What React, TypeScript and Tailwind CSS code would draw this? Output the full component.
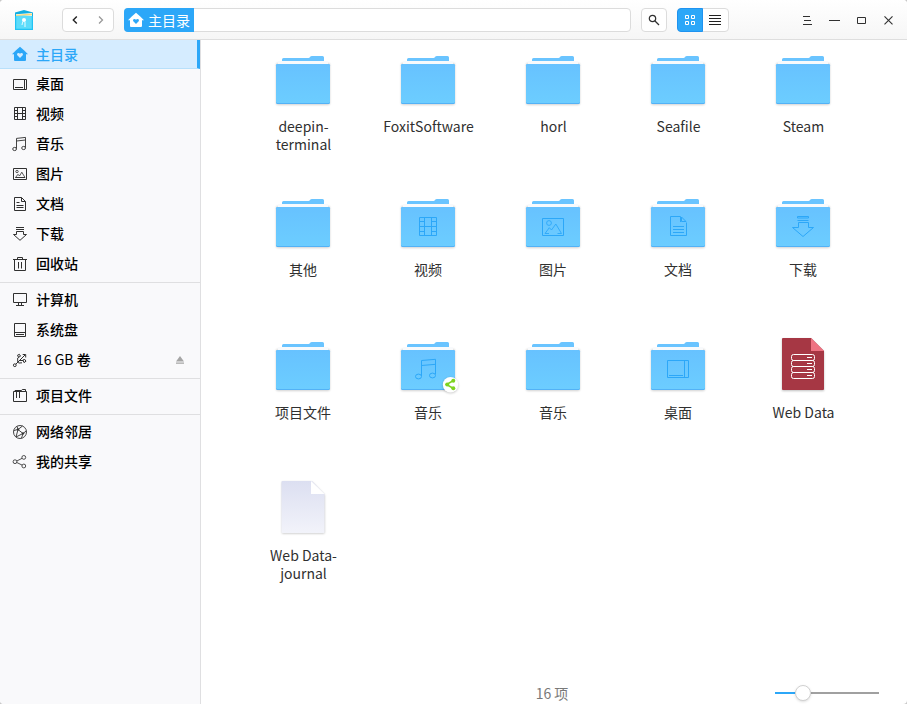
import React from "react";

type Kind =
  | "desktop" | "video" | "music" | "image" | "doc" | "download" | "trash"
  | "computer" | "disk" | "usb" | "project" | "network" | "share" | "home";

function House({ fill, heart }: { fill: string; heart: string }) {
  return (
    <svg width="16" height="16" viewBox="0 0 16 16" className="shrink-0">
      <path d="M8 .8 12 4.3 16 8.2H14V14Q14 15 13 15H3Q2 15 2 14V8.2H0L4 4.3Z" fill={fill} />
      <path d="M8 12 5.3 9.2Q4.6 8.1 5.5 7.3Q6.8 6.4 8 7.7Q9.2 6.4 10.5 7.3Q11.4 8.1 10.7 9.2Z" fill={heart} />
    </svg>
  );
}

function SideIcon({ kind }: { kind: Kind }) {
  if (kind === "home") return <House fill="#2ca7f8" heart="#d5ecff" />;
  return (
    <svg width="16" height="16" viewBox="0 0 16 16" fill="none" stroke="#303030" strokeWidth="1" className="shrink-0">
      {kind === "desktop" && <path d="M1.5 3.5h13v10h-13ZM12.5 3.5v10M3 11.5h8" />}
      {kind === "video" && <path d="M2.5 1.5h11v12h-11ZM5.5 1.5v12M10.5 1.5v12M5.5 7.5h5M2.5 4.5h3M2.5 7.5h3M2.5 10.5h3M10.5 4.5h3M10.5 7.5h3M10.5 10.5h3" />}
      {kind === "music" && (
        <g strokeWidth=".9">
          <path d="M4.5 12.5V2.4L13.5 1.4V11.5M4.5 5 13.5 4" />
          <ellipse cx="2.6" cy="13" rx="1.9" ry="1.6" />
          <ellipse cx="11.6" cy="12" rx="1.9" ry="1.6" />
        </g>
      )}
      {kind === "image" && (
        <g>
          <path d="M1.5 2.5h13v11h-13Z" />
          <path strokeWidth=".8" d="M3.5 11.5 6 8.3 7.5 10 9.8 6.2 13 11.5ZM3.5 11.5H13" />
          <circle strokeWidth=".8" cx="5" cy="5.5" r="1.2" />
        </g>
      )}
      {kind === "doc" && <path d="M9.5 1.5h-7v13h11V5.5ZM9.5 1.5v4h4M4.5 6.5h3M4.5 9.5h7M4.5 11.5h7" />}
      {kind === "download" && <path d="M4 1.5h8M4 3.5h8M4.5 5.5h7v3h3L8 14.3 1.5 8.5h3Z" />}
      {kind === "trash" && <path d="M1 3.5h14M5.5 3V1.5h5V3M2.5 3.5v11h11v-11M6.5 6v6.5M9.5 6v6.5" />}
      {kind === "computer" && <path d="M1.5 1.5h13v9h-13ZM6.5 10.5v2.5M9.5 10.5v2.5M4 13.5h8" />}
      {kind === "disk" && <path d="M2.5 1.5h11v13h-11ZM2.5 10.5h11M4 12.5h8" />}
      {kind === "usb" && (
        <g strokeWidth="1">
          <path d="M3.800 12.200 13 3M10.700 2.500h3v3M5.700 9.500V6L7 4.800M8 8.500h3.200" />
          <circle cx="2.800" cy="13.200" r="1.400" />
          <path d="M5.500 3.200 7.400 2.300 8.500 4.200 6.500 5.300ZM10.800 8l2-.6L14 9.200 12 10.600Z" />
          <path d="M5.200 9.500q1 2.400 4.800 1.300" />
        </g>
      )}
      {kind === "project" && <path d="M1.5 3.5h13v10h-13ZM4.5 4v6M7.500 4v6M3 3.500V2.500h6.500l.8-1h3.200v2" />}
      {kind === "network" && (
        <g strokeWidth=".9">
          <circle cx="8" cy="8" r="6.5" />
          <path d="M1.8 6.5 6 5.5 11 9.5 9.5 14.2M6 5.5 10.5 2M6 5.5 4 13M11 9.5 4 13M11 9.5 14.2 7M6 5.5 5 2.2" />
          <circle cx="6" cy="5.5" r=".8" fill="#303030" />
          <circle cx="11" cy="9.5" r=".8" fill="#303030" />
        </g>
      )}
      {kind === "share" && (
        <g strokeWidth=".85">
          <circle cx="3" cy="7.7" r="1.9" />
          <circle cx="11.8" cy="3.4" r="1.9" />
          <circle cx="11.8" cy="12" r="1.9" />
          <path d="M4.8 7 10.1 4.3M4.8 8.5l5.3 2.6" />
        </g>
      )}
    </svg>
  );
}

function SideItem({ kind, label, active = false, eject = false }: { kind: Kind; label: React.ReactNode; active?: boolean; eject?: boolean }) {
  if (active) {
    return (
      <div className="mb-px flex h-[29px] items-center border-b border-r-[3px] border-[#b8e0fb] border-r-[#2ca7f8] bg-[#d5ecff] pl-3 text-[#2ca7f8]">
        <SideIcon kind={kind} />
        <span className="ml-2 font-medium leading-5">{label}</span>
      </div>
    );
  }
  return (
    <div className="flex h-[30px] items-center pb-1 pl-3 pt-0.5 text-black">
      <SideIcon kind={kind} />
      <span className="mb-0.5 ml-2 font-medium leading-5">{label}</span>
      {eject && (
        <svg width="8" height="8" viewBox="0 0 8 8" className="ml-auto mr-4 shrink-0" fill="#a5a5a5">
          <path d="M4 0 8 5.500H0ZM0 6.500h8v1.200H0Z" />
        </svg>
      )}
    </div>
  );
}

function Separator() {
  return <div className="mb-[3px] mt-0.5 h-px bg-[#dfdfe1]" />;
}

function Emblem({ kind }: { kind: string }) {
  return (
    <g fill="none" stroke="#2ca7f8" strokeWidth="1">
      {kind === "video" && <path d="M23.5 24.5h17v18h-17ZM28.5 24.5v18M35.5 24.5v18M28.5 33.5h7M23.5 28.5h5M23.5 33.5h5M23.5 38.5h5M35.5 28.5h5M35.5 33.5h5M35.5 38.5h5" />}
      {kind === "image" && (
        <g>
          <path d="M21.5 25.500h21v17h-21Z" />
          <path strokeWidth=".9" d="M24 40.500 28.300 34.700 30.500 37 34.800 31 40.500 40.500H36.500M24 40.500H28" />
          <circle strokeWidth=".9" cx="28" cy="30" r="2.400" />
        </g>
      )}
      {kind === "doc" && <path d="M34.500 23.500h-10v19h16V29.500M34.500 23.500v5.500M35.500 24v4.500h4.500ZM27 33.500h11M27 36.500h11M27 39.500h11" />}
      {kind === "download" && <path d="M26.5 23.5h11v1.500h-11ZM26.5 27.500h11M27.500 29.500h10v5h5L32 43.500 21.500 34.500h6Z" />}
      {kind === "music" && (
        <g>
          <path d="M25.500 40V24.500l14-1.200v15M25.500 29.500l14-1.200" />
          <ellipse cx="22.500" cy="40.500" rx="3" ry="2.400" />
          <ellipse cx="36.500" cy="39.500" rx="3" ry="2.400" />
        </g>
      )}
      {kind === "desktop" && <path d="M21.5 24.5h21v17h-21ZM38.5 24.5v17M23 39.500h14" />}
    </g>
  );
}

function Folder({ emblem, shared }: { emblem?: string; shared?: boolean }) {
  return (
    <svg width="65" height="60" viewBox="0 0 65 60" className="block">
      <defs>
        <linearGradient id="body" x1="0" y1="0" x2="0" y2="1">
          <stop offset="0" stopColor="#67c2ff" />
          <stop offset="1" stopColor="#6ccdff" />
        </linearGradient>
        <filter id="soft" x="-20%" y="-20%" width="140%" height="150%">
          <feGaussianBlur stdDeviation="1.2" />
        </filter>
      </defs>
      <rect x="5" y="13" width="54" height="42" rx="2" fill="#000" opacity=".18" filter="url(#soft)" />
      <path d="M11 12V9.5Q11 8 12.500 8H37.500Q38.500 8 39 7Q39.500 6 41 6H51.500Q53 6 53 7.500V12Z" fill="#6ac4ff" />
      <rect x="7" y="11" width="50" height="5" rx="1" fill="#f8fafc" />
      <rect x="5" y="14" width="54" height="40" rx="1.500" fill="#53b2f6" />
      <path d="M5 15.500Q5 14 6.500 14H57.500Q59 14 59 15.500V51.500Q59 53 57.500 53H6.500Q5 53 5 51.500Z" fill="url(#body)" />
      {emblem && <Emblem kind={emblem} />}
      {shared && (
        <g>
          <circle cx="54.500" cy="49.500" r="8" fill="#000" opacity=".18" filter="url(#soft)" />
          <circle cx="54.500" cy="48.700" r="7.700" fill="#fff" />
          <path d="m57.500 44.500-7 4 7 4" fill="none" stroke="#7ed321" strokeWidth="1.500" />
          <g fill="#7ed321"><circle cx="57.300" cy="44.700" r="2" /><circle cx="51.200" cy="48.500" r="2" /><circle cx="57.300" cy="52.300" r="2" /></g>
        </g>
      )}
    </svg>
  );
}

function DatabaseFile() {
  return (
    <svg width="65" height="60" viewBox="0 0 65 60" className="block">
      <path d="M11 3H40L53 16V55H11Z" fill="#000" opacity=".25" filter="url(#soft)" />
      <path d="M12 2H40L53 15V53Q53 54 52 54H12Q11 54 11 53V3Q11 2 12 2Z" fill="#a63744" />
      <path d="M40 2 53 15H40Z" fill="#ee7282" />
      <g fill="none" stroke="#fff" strokeWidth="1">
        {[18.5, 24.5, 30.5, 36.5].map((y) => (
          <g key={y}>
            <rect x="20.500" y={y} width="23" height="6" rx="2" />
            <path d={"M36 " + (y + 3) + "h5"} />
          </g>
        ))}
      </g>
    </svg>
  );
}

function BlankFile() {
  return (
    <svg width="65" height="60" viewBox="0 0 65 60" className="block">
      <defs>
        <linearGradient id="sheet" x1="0" y1="0" x2="0" y2="1">
          <stop offset="0" stopColor="#dcdff1" />
          <stop offset="1" stopColor="#f2f3fa" />
        </linearGradient>
      </defs>
      <path d="M11 3H41L53.500 16V54.500H11Z" fill="#000" opacity=".25" filter="url(#soft)" />
      <path d="M11.500 2H41L53.500 15V53Q53.500 54 52.500 54H11.500Q10.500 54 10.500 53V3Q10.500 2 11.500 2Z" fill="url(#sheet)" />
      <path d="M40 2 53.500 15H40Z" fill="#fff" />
    </svg>
  );
}

interface Entry { name: string[]; emblem?: string; shared?: boolean; file?: "db" | "blank" }

const entries: Entry[] = [
  { name: ["deepin-", "terminal"] }, { name: ["FoxitSoftware"] }, { name: ["horl"] }, { name: ["Seafile"] }, { name: ["Steam"] },
  { name: ["其他"] }, { name: ["视频"], emblem: "video" }, { name: ["图片"], emblem: "image" }, { name: ["文档"], emblem: "doc" }, { name: ["下载"], emblem: "download" },
  { name: ["项目文件"] }, { name: ["音乐"], emblem: "music", shared: true }, { name: ["音乐"] }, { name: ["桌面"], emblem: "desktop" }, { name: ["Web Data"], file: "db" },
  { name: ["Web Data-", "journal"], file: "blank" },
];

function GridItem({ entry }: { entry: Entry }) {
  return (
    <div className="flex h-[143px] flex-col items-center">
      {entry.file === "db" ? <DatabaseFile /> : entry.file === "blank" ? <BlankFile /> : <Folder emblem={entry.emblem} shared={entry.shared} />}
      <div className="mt-[7px] text-center text-[14px] leading-[18px] text-[#303030]">
        {entry.name.map((line) => (
          <div key={line} className={/^[A-Za-z]/.test(line) ? "" : "mr-px"}>{line}</div>
        ))}
      </div>
    </div>
  );
}

function AppLogo() {
  return (
    <svg width="18" height="20" viewBox="0 0 18 20" className="shrink-0">
      <path d="M0 2.500 9 0l9 2.500V20H0Z" fill="#12aee2" />
      <path d="M1 4.200 17 3V7H1Z" fill="#fff" />
      <path d="M1 4.800 17 3.600V5.200L1 6.300Z" fill="#ffd978" />
      <path d="M0 6Q9 5 18 6V20H0Z" fill="#5ddcfa" />
      <path d="M.6 6V19.400H17.400V6" fill="none" stroke="#22c3f4" strokeWidth="1.200" />
      <circle cx="9" cy="10" r="2" fill="#fff" />
      <path d="M7.800 11.500 7 15M10 12v5" stroke="#d9f9ff" strokeWidth="1.100" />
    </svg>
  );
}

function Header() {
  return (
    <header className="flex h-10 items-center border-b border-[#dedede] bg-linear-to-b from-white to-[#f6f6f6] pl-[15px] pr-3.5 pt-px">
      <AppLogo />
      <div className="ml-[29px] flex h-6 w-[52px] items-center justify-between rounded border border-[#dcdcdc] bg-white px-2">
        <svg width="8" height="10" viewBox="0 0 8 10" fill="none" stroke="#222" strokeWidth="1.400"><path d="M5.800 1.500 2.300 5l3.500 3.500" /></svg>
        <svg width="8" height="10" viewBox="0 0 8 10" fill="none" stroke="#999" strokeWidth="1.300"><path d="M2 1.500 5.500 5 2 8.500" /></svg>
      </div>
      <div className="ml-2.5 flex h-6 w-[507px] rounded border border-[#dcdcdc] bg-white">
        <div className="-my-px -ml-px flex w-[70px] shrink-0 items-center rounded-l bg-[#2ca7f8] pl-1 text-[14px] text-white">
          <House fill="#fff" heart="#2ca7f8" />
          <span className="ml-1 leading-5">主目录</span>
        </div>
      </div>
      <div className="ml-2.5 flex h-6 w-[26px] items-center justify-center rounded border border-[#dcdcdc] bg-white">
        <svg width="12" height="12" viewBox="0 0 12 12" fill="none" stroke="#303030"><circle cx="4.500" cy="4.500" r="3.200" strokeWidth="1.200" /><path d="m7 7 4 4" strokeWidth="1.300" /></svg>
      </div>
      <div className="ml-2.5 flex h-6 w-[52px] rounded border border-[#dcdcdc] bg-white">
        <div className="-my-px -ml-px flex w-[26px] shrink-0 items-center justify-center rounded-l border border-[#1f93f0] bg-[#2ca7f8]">
          <svg width="10" height="10" viewBox="0 0 10 10" fill="none" stroke="#fff"><path d="M.5.5h3v3h-3ZM6.500.5h3v3h-3ZM.5 6.500h3v3h-3ZM6.500 6.500h3v3h-3Z" /></svg>
        </div>
        <div className="flex grow items-center pl-1.5">
          <svg width="12" height="10" viewBox="0 0 12 10" stroke="#222"><path d="M0 .5h12M0 3.500h12M0 6.500h12M0 9.500h12" /></svg>
        </div>
      </div>
      <svg width="92" height="10" viewBox="0 0 92 10" fill="none" stroke="#303030" className="ml-auto">
        <path d="M2 1.500h7M3 5.500h7M2 9.500h9M28 5.500h11M56.500 2.500h8v6h-8Z" />
        <path d="m83.500 1.300 8 8M91.500 1.300l-8 8" strokeWidth="1.100" />
      </svg>
    </header>
  );
}

export default function App() {
  return (
    <div className="bg-[#c8c8c8]">
      <div className="flex h-[704px] w-[907px] flex-col overflow-hidden rounded bg-white font-['Noto_Sans_CJK_SC',sans-serif]">
        <Header />
        <div className="flex min-h-0 grow">
          <aside className="w-[201px] shrink-0 border-r border-[#dfdfe1] bg-[#f9f9fb] text-[14px]">
            <SideItem kind="home" label="主目录" active />
            <SideItem kind="desktop" label="桌面" />
            <SideItem kind="video" label="视频" />
            <SideItem kind="music" label="音乐" />
            <SideItem kind="image" label="图片" />
            <SideItem kind="doc" label="文档" />
            <SideItem kind="download" label="下载" />
            <SideItem kind="trash" label="回收站" />
            <Separator />
            <SideItem kind="computer" label="计算机" />
            <SideItem kind="disk" label="系统盘" />
            <SideItem kind="usb" label={<><span className="font-normal">16 GB</span> 卷</>} eject />
            <Separator />
            <SideItem kind="project" label="项目文件" />
            <Separator />
            <SideItem kind="network" label="网络邻居" />
            <SideItem kind="share" label="我的共享" />
          </aside>
          <main className="flex grow flex-col">
            <div className="grid grid-cols-[repeat(5,125px)] pl-10 pt-2.5">
              {entries.map((entry, i) => <GridItem key={i} entry={entry} />)}
            </div>
            <footer className="mt-auto grid h-[22px] grid-cols-[1fr_auto_1fr] items-center pr-7">
              <span />
              <span className="ml-6 text-[14px] leading-5 text-[#797979]">16 项</span>
              <div className="flex items-center justify-end">
                <div className="h-0.5 w-5 bg-[#2ca7f8]" />
                <div className="z-10 size-4 rounded-full border border-[#d0d0d0] bg-white shadow-sm" />
                <div className="h-0.5 w-[68px] bg-[#a0a0a0]" />
              </div>
            </footer>
          </main>
        </div>
      </div>
    </div>
  );
}
